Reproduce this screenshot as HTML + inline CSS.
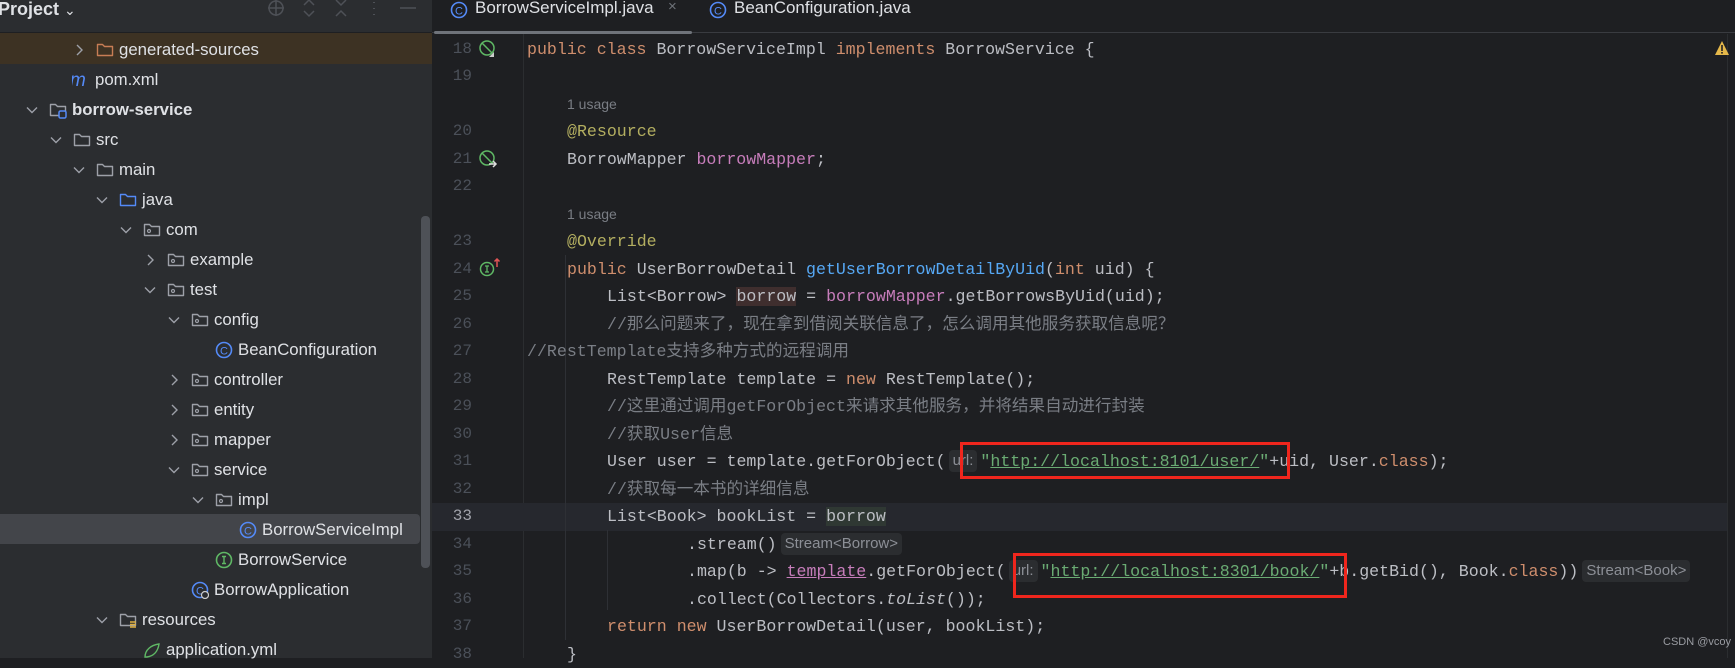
<!DOCTYPE html>
<html><head><meta charset="utf-8"><style>
*{margin:0;padding:0;box-sizing:border-box}
body{width:1735px;height:658px;overflow:hidden;background:#1e1f22;position:relative;font-family:"Liberation Sans","Noto Sans CJK SC",sans-serif}
.a{position:absolute}
#side{left:0;top:0;width:432px;height:658px;background:#2b2d30}
.row{position:absolute;left:0;width:420px;height:30px;line-height:30px;font-size:16.8px;color:#dfe1e5;white-space:nowrap}
.row .t{position:absolute;top:0}
.chev{position:absolute;top:9px;width:12px;height:12px}
.ic{position:absolute;top:6px;width:18px;height:18px}
.ln{position:absolute;width:40px;text-align:right;left:432px;font:16px "Liberation Mono",monospace;color:#4b5059;height:27.5px;line-height:27.5px}
.cl{position:absolute;white-space:pre;font:16.6px "Liberation Mono","Noto Sans CJK SC",monospace;color:#bcbec4;height:27.5px;line-height:27.5px}
.k{color:#cf8e6d}.m{color:#56a8f5}.f{color:#c77dbb}.an{color:#b3ae60}.c{color:#7a7e85}.s{color:#6aab73}
.hint{font:14px "Liberation Sans",sans-serif;color:#7a7e85;position:absolute;height:27.5px;line-height:27.5px}
.inl{display:inline-block;background:#2b2d30;color:#8c8f96;font:15px "Liberation Sans",sans-serif;border-radius:4px;padding:0 4px;line-height:22px;vertical-align:1px}
.red{position:absolute;border:3px solid #f0261d}
</style></head><body>
<div id="side" class="a">
 <div class="a" style="left:0;top:0;width:432px;height:33px;border-bottom:1px solid #1e1f22"></div>
 <div class="a" style="left:-2px;top:-1px;font-size:18px;font-weight:bold;color:#dfe1e5">Project <span style="font-weight:normal;font-size:14px">&#8964;</span></div>
 <svg class="a" style="left:268px;top:0" width="160" height="20" fill="none" stroke="#4e5157" stroke-width="1.5">
  <circle cx="8" cy="8" r="7"/><path d="M8 0v16M0 8h16"/>
  <path d="M36 5l5-5 5 5M36 11l5 5 5-5"/>
  <path d="M68 0l5 5 5-5M68 16l5-5 5 5"/>
  <path d="M106 2v1M106 8v1M106 14v1" stroke-width="2"/>
  <path d="M132 8h16"/>
 </svg>
 <div class="a" style="left:0;top:33px;width:432px;height:31px;background:#3d3223"></div>
 <div class="a" style="left:0;top:514px;width:420px;height:30px;background:#43454a;border-radius:0 4px 4px 0"></div>
 <div class="a" style="left:421px;top:216px;width:9px;height:352px;background:#4e5157;border-radius:4px"></div>
</div>

<div id="tree"></div>

<div class="a" style="left:432px;top:0;width:1303px;height:33px;background:#1e1f22;border-bottom:1px solid #393b40"></div>
<div class="a" style="left:434px;top:31px;width:258px;height:3px;background:#6f737a;border-radius:2px"></div>
<svg class="a" style="left:450px;top:1px" width="18" height="18"><circle cx="9" cy="9" r="7.5" fill="none" stroke="#548af7" stroke-width="1.6"/><text x="9" y="13.5" font-size="11" text-anchor="middle" fill="#548af7" font-family="Liberation Sans">C</text></svg>
<div class="a" style="left:475px;top:-2px;font-size:17px;color:#dfe1e5">BorrowServiceImpl.java</div>
<div class="a" style="left:668px;top:-2px;font-size:15px;color:#6f737a">×</div>
<svg class="a" style="left:709px;top:1px" width="18" height="18"><circle cx="9" cy="9" r="7.5" fill="none" stroke="#548af7" stroke-width="1.6"/><text x="9" y="13.5" font-size="11" text-anchor="middle" fill="#548af7" font-family="Liberation Sans">C</text></svg>
<div class="a" style="left:734px;top:-2px;font-size:17px;color:#dfe1e5">BeanConfiguration.java</div>

<div class="a" style="left:523px;top:34px;width:1px;height:624px;background:#2b2d30"></div>
<div class="a" style="left:432px;top:503px;width:1295px;height:27.5px;background:#26282e"></div>
<div class="a" style="left:1727px;top:34px;width:1px;height:624px;background:#2b2d30"></div>
<div class="a" style="left:565px;top:255px;width:1px;height:385px;background:#2e3035"></div>
<div class="a" style="left:607px;top:530px;width:1px;height:80px;background:#2e3035"></div>

<div id="code"></div>

<svg class="a" style="left:479px;top:40px" width="20" height="20" fill="none" stroke="#5fb865" stroke-width="1.5"><circle cx="8" cy="8" r="7"/><path d="M3 3l10 10"/><path d="M15 12v5h-5z" fill="#ccc" stroke="none"/></svg>
<svg class="a" style="left:479px;top:150px" width="20" height="20" fill="none" stroke="#5fb865" stroke-width="1.5"><circle cx="8" cy="8" r="7"/><path d="M3 3l10 10"/><path d="M10 14h7M14 11l3 3-3 3" stroke="#ddd"/></svg>
<svg class="a" style="left:479px;top:258px" width="22" height="20" fill="none" stroke="#5fb865" stroke-width="1.5"><circle cx="8" cy="11" r="6.5"/><path d="M6 8h4M8 8v6M6 14h4" stroke-width="1.3"/><path d="M18 9V1M15.5 3.5L18 1l2.5 2.5" stroke="#e05555"/></svg>
<svg class="a" style="left:1714px;top:40px" width="16" height="16"><path d="M8 1L15 15H1z" fill="#e5b84a"/><rect x="7.2" y="5" width="1.6" height="6" fill="#1e1f22"/><rect x="7.2" y="12" width="1.6" height="1.6" fill="#1e1f22"/></svg>

<div class="red" style="left:960px;top:442px;width:330px;height:37px"></div>
<div class="red" style="left:1013px;top:553px;width:334px;height:45px"></div>
<div class="a" style="left:1663px;top:636px;font-size:11px;color:#9a9ca2">CSDN @vcoy</div>

<script>
const tree=[
["generated-sources",119,"chevR","orange"],
["pom.xml",95,null,"m"],
["borrow-service",72,"chevD","module"],
["src",96,"chevD","folder"],
["main",119,"chevD","folder"],
["java",142,"chevD","blue"],
["com",166,"chevD","pkg"],
["example",190,"chevR","pkg"],
["test",190,"chevD","pkg"],
["config",214,"chevD","pkg"],
["BeanConfiguration",238,null,"C"],
["controller",214,"chevR","pkg"],
["entity",214,"chevR","pkg"],
["mapper",214,"chevR","pkg"],
["service",214,"chevD","pkg"],
["impl",238,"chevD","pkg"],
["BorrowServiceImpl",262,null,"C"],
["BorrowService",238,null,"I"],
["BorrowApplication",214,null,"CA"],
["resources",142,"chevD","res"],
["application.yml",166,null,"yml"]];
let h="";
tree.forEach((r,i)=>{
 const top=35+30*i,[t,x,ch,ic]=r;
 h+=`<div class="row" style="top:${top}px">`;
 if(ch){const p=ch=="chevR"?"M4 1l5 5-5 5":"M1 3.5l5 5 5-5";h+=`<svg class="chev" style="left:${x-46}px" viewBox="0 0 12 12"><path d="${p}" fill="none" stroke="#9da0a8" stroke-width="1.4"/></svg>`;}
 const il=x-23;
 let s="";
 const fold=(c)=>`<path d="M1.5 3.5v11h15v-9h-8l-2-2z" fill="none" stroke="${c}" stroke-width="1.4" stroke-linejoin="round"/>`;
 if(ic=="orange")s=fold("#c77d55");
 else if(ic=="folder")s=fold("#9da0a8");
 else if(ic=="blue")s=fold("#548af7");
 else if(ic=="pkg")s=fold("#9da0a8")+`<circle cx="6" cy="10" r="1.5" fill="none" stroke="#9da0a8" stroke-width="1.2"/>`;
 else if(ic=="module")s=fold("#9da0a8")+`<rect x="10" y="10" width="7" height="7" rx="1.5" fill="#2b2d30" stroke="#548af7" stroke-width="1.5"/>`;
 else if(ic=="res")s=fold("#9da0a8")+`<path d="M11 11h6M11 13.5h6M11 16h6" stroke="#e0b040" stroke-width="1.5"/>`;
 else if(ic=="m")s=`<text x="-2" y="15" font-size="19" font-style="italic" fill="#548af7" font-family="Liberation Sans">m</text>`;
 else if(ic=="C"||ic=="CA")s=`<circle cx="9" cy="9" r="7.5" fill="none" stroke="#548af7" stroke-width="1.6"/><text x="9" y="13.5" font-size="11" text-anchor="middle" fill="#548af7" font-family="Liberation Sans">C</text>`+(ic=="CA"?`<circle cx="14" cy="14" r="3.5" fill="#2b2d30" stroke="#ccc" stroke-width="1.2"/>`:"");
 else if(ic=="I")s=`<circle cx="9" cy="9" r="7.5" fill="none" stroke="#5fb865" stroke-width="1.6"/><path d="M7 5.5h4M9 5.5v7M7 12.5h4" stroke="#5fb865" stroke-width="1.4"/>`;
 else if(ic=="yml")s=`<path d="M2 16c0-7 6-12 14-13-1 7-5 12-12 13z" fill="none" stroke="#5fb865" stroke-width="1.4"/>`;
 h+=`<svg class="ic" style="left:${il}px" viewBox="0 0 18 18">${s}</svg>`;
 h+=`<span class="t" style="left:${x}px;${ic=="module"?"font-weight:bold":""}">${t}</span></div>`;
});
document.getElementById("tree").innerHTML=h;

const L=[
[18,527,'<span class="k">public class</span> BorrowServiceImpl <span class="k">implements</span> BorrowService {'],
[19,0,''],
['h',567,'1 usage'],
[20,567,'<span class="an">@Resource</span>'],
[21,567,'BorrowMapper <span class="f">borrowMapper</span>;'],
[22,0,''],
['h',567,'1 usage'],
[23,567,'<span class="an">@Override</span>'],
[24,567,'<span class="k">public</span> UserBorrowDetail <span class="m">getUserBorrowDetailByUid</span>(<span class="k">int</span> uid) {'],
[25,607,'List&lt;Borrow&gt; <span style="background:#3f2e2e">borrow</span> = <span class="f">borrowMapper</span>.getBorrowsByUid(uid);'],
[26,607,'<span class="c">//那么问题来了，现在拿到借阅关联信息了，怎么调用其他服务获取信息呢？</span>'],
[27,527,'<span class="c">//RestTemplate支持多种方式的远程调用</span>'],
[28,607,'RestTemplate template = <span class="k">new</span> RestTemplate();'],
[29,607,'<span class="c">//这里通过调用getForObject来请求其他服务，并将结果自动进行封装</span>'],
[30,607,'<span class="c">//获取User信息</span>'],
[31,607,'User user = template.getForObject(<span class="inl" style="margin:0 3px">url:</span><span class="s">"<u>http://localhost:8101/user/</u>"</span>+uid, User.<span class="k">class</span>);'],
[32,607,'<span class="c">//获取每一本书的详细信息</span>'],
[33,607,'List&lt;Book&gt; bookList = <span style="background:#2f3833">borrow</span>'],
[34,687,'.stream()<span class="inl" style="margin-left:4px">Stream&lt;Borrow&gt;</span>'],
[35,687,'.map(b -&gt; <span class="f"><u>template</u></span>.getForObject(<span class="inl" style="margin:0 3px">url:</span><span class="s">"<u>http://localhost:8301/book/</u>"</span>+b.getBid(), Book.<span class="k">class</span>))<span class="inl" style="margin-left:4px">Stream&lt;Book&gt;</span>'],
[36,687,'.collect(Collectors.<i>toList</i>());'],
[37,607,'<span class="k">return new</span> UserBorrowDetail(user, bookList);'],
[38,567,'}']];
let c="";
L.forEach((r,i)=>{
 const top=35.5+27.5*i;
 if(r[0]=='h'){c+=`<div class="hint" style="left:${r[1]}px;top:${top}px">${r[2]}</div>`;return;}
 c+=`<div class="ln" style="top:${top}px;${r[0]==33?'color:#a1a3ab':''}">${r[0]}</div>`;
 if(r[2])c+=`<div class="cl" style="left:${r[1]}px;top:${top}px">${r[2]}</div>`;
});
document.getElementById("code").innerHTML=c;
</script>
</body></html>
